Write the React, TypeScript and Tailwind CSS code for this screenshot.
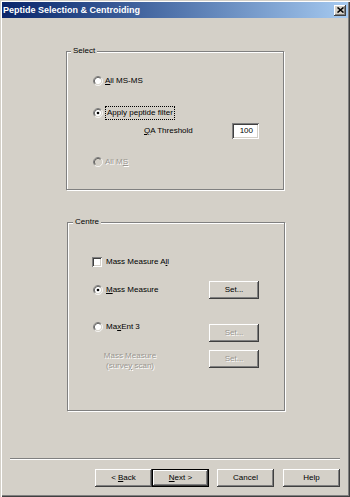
import React from "react";

const bevelOut =
  "shadow-[inset_-1px_-1px_0_#404040,inset_1px_1px_0_#ffffff,inset_-2px_-2px_0_#808080,inset_2px_2px_0_#d4d0c8]";
const sunken =
  "shadow-[inset_1px_1px_0_#808080,inset_-1px_-1px_0_#ffffff,inset_2px_2px_0_#404040,inset_-2px_-2px_0_#d4d0c8]";
const disabledText = "text-[#9a9791] [text-shadow:1px_1px_0_#ffffff]";

function Radio({ checked = false, disabled = false }: { checked?: boolean; disabled?: boolean }) {
  return (
    <svg width="10" height="10" viewBox="0 0 12 12" className="shrink-0">
      <circle cx="6" cy="6" r="4.2" fill={disabled ? "#d4d0c8" : "#ffffff"} />
      <path d="M2.11 9.89 A5.5 5.5 0 0 1 9.89 2.11" fill="none" stroke="#808080" strokeWidth="1" />
      <path d="M9.89 2.11 A5.5 5.5 0 0 1 2.11 9.89" fill="none" stroke="#ffffff" strokeWidth="1" />
      <path d="M2.82 9.18 A4.5 4.5 0 0 1 9.18 2.82" fill="none" stroke="#404040" strokeWidth="1" />
      <path d="M9.18 2.82 A4.5 4.5 0 0 1 2.82 9.18" fill="none" stroke="#d4d0c8" strokeWidth="1" />
      {checked && <circle cx="6" cy="6" r="1.6" fill="#000000" />}
    </svg>
  );
}

function Checkbox() {
  return <div className={`w-[10px] h-[10px] bg-white shrink-0 ${sunken}`} />;
}

function SetButton({ disabled = false }: { disabled?: boolean }) {
  return (
    <div
      className={`w-[50px] h-[18px] flex items-center justify-center bg-[#d4d0c8] ${bevelOut} ${
        disabled ? disabledText : "text-black"
      }`}
    >
      Set...
    </div>
  );
}

function DlgButton({ children, isDefault = false }: { children: React.ReactNode; isDefault?: boolean }) {
  return (
    <div
      className={`w-[57px] h-[18px] flex items-center justify-center bg-[#d4d0c8] text-black ${
        isDefault
          ? "border border-black shadow-[inset_-1px_-1px_0_#404040,inset_1px_1px_0_#ffffff,inset_-2px_-2px_0_#808080]"
          : bevelOut
      }`}
    >
      {children}
    </div>
  );
}

export default function App() {
  return (
    <div className="w-[350px] h-[497px] bg-[#d4d0c8] p-[2px] flex flex-col font-['Liberation_Sans',Arial,sans-serif] text-[8px] leading-[10px] text-black shadow-[inset_1px_1px_0_#d4d0c8,inset_2px_2px_0_#ffffff,inset_-1px_-1px_0_#404040,inset_-2px_-2px_0_#808080] overflow-hidden">
      {/* Title bar */}
      <div className="h-[16px] bg-gradient-to-r from-[#0a246a] to-[#a6caf0] flex items-center justify-between pl-[1px] pr-[2px]">
        <span className="text-white font-bold text-[9px] leading-[12px]">Peptide Selection &amp; Centroiding</span>
        <div className={`w-[12px] h-[11px] bg-[#d4d0c8] flex items-center justify-center ${bevelOut}`}>
          <svg width="7" height="6" viewBox="0 0 7 6">
            <path d="M0.5 0.5 L6.5 5.5 M6.5 0.5 L0.5 5.5" stroke="#000" strokeWidth="1.6" />
          </svg>
        </div>
      </div>

      {/* Select group */}
      <div className="relative mt-[33px] ml-[64px] w-[218px] h-[139px] border border-[#808080] shadow-[1px_1px_0_#ffffff,inset_1px_1px_0_#ffffff]">
        <span className="absolute -top-[6px] left-[4px] px-[2px] bg-[#d4d0c8]">Select</span>
        <div className="flex flex-col pt-[22px] pl-[26px]">
          <div className="h-[14px] flex items-center gap-[2px]">
            <Radio />
            <span>
              <span className="underline">A</span>ll MS-MS
            </span>
          </div>
          <div className="h-[14px] mt-[18px] flex items-center gap-[2px]">
            <Radio checked />
            <span className="h-[14px] flex items-center px-[1px] border border-dotted border-black">
              Apply peptide filter
            </span>
          </div>
          <div className="h-[16px] mt-[3px] flex items-center">
            <span className="ml-[51px] w-[88px]">
              <span className="underline">Q</span>A Threshold
            </span>
            <div className={`w-[27px] h-[16px] bg-white flex items-center justify-end pr-[6px] ${sunken}`}>100</div>
          </div>
          <div className="h-[14px] mt-[16px] flex items-center gap-[2px]">
            <Radio disabled />
            <span className={disabledText}>
              All M<span className="underline">S</span>
            </span>
          </div>
        </div>
      </div>

      {/* Centre group */}
      <div className="relative mt-[32px] ml-[65px] w-[218px] h-[189px] border border-[#808080] shadow-[1px_1px_0_#ffffff,inset_1px_1px_0_#ffffff]">
        <span className="absolute -top-[6px] left-[5px] px-[2px] bg-[#d4d0c8]">Centre</span>
        <div className="flex flex-col pt-[32px] pl-[24px]">
          <div className="h-[14px] flex items-center gap-[4px]">
            <Checkbox />
            <span>
              Mass Measure A<span className="underline">l</span>l
            </span>
          </div>
          <div className="h-[18px] mt-[12px] flex items-center">
            <div className="w-[117px] flex items-center gap-[3px] pl-[1px]">
              <Radio checked />
              <span>
                <span className="underline">M</span>ass Measure
              </span>
            </div>
            <SetButton />
          </div>
          <div className="h-[22px] mt-[21px] flex items-start">
            <div className="w-[117px] h-[14px] flex items-center gap-[3px] pl-[1px]">
              <Radio />
              <span>
                Ma<span className="underline">x</span>Ent 3
              </span>
            </div>
            <div className="mt-[4px]">
              <SetButton disabled />
            </div>
          </div>
          <div className="h-[18px] mt-[8px] flex items-start">
            <div className={`w-[58px] ml-[9px] mr-[50px] text-center leading-[10px] pt-[1px] ${disabledText}`}>
              Mass Measure
              <br />
              (surve<span className="underline">y</span> scan)
            </div>
            <SetButton disabled />
          </div>
        </div>
      </div>

      {/* Separator */}
      <div className="mt-[47px] ml-[8px] w-[330px] h-[2px] border-t border-[#808080] border-b border-b-white" />

      {/* Buttons */}
      <div className="mt-[9px] ml-[93px] flex">
        <DlgButton>
          &lt; <span className="underline ml-[2px]">B</span>ack
        </DlgButton>
        <DlgButton isDefault>
          <span className="underline">N</span>ext &gt;
        </DlgButton>
        <div className="ml-[8px]">
          <DlgButton>Cancel</DlgButton>
        </div>
        <div className="ml-[9px]">
          <DlgButton>Help</DlgButton>
        </div>
      </div>
    </div>
  );
}
